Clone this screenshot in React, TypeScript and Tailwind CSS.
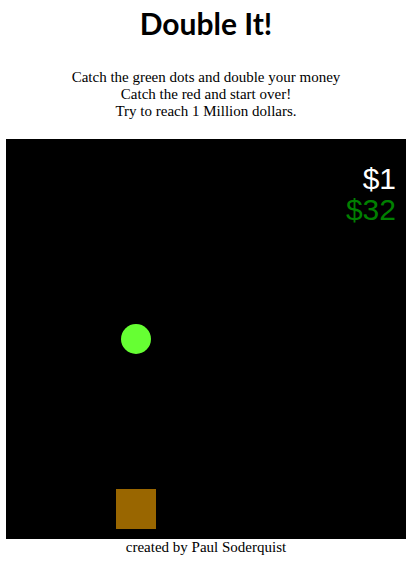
export default function App() {
  return (
    <div className="w-[412px] h-[564px] bg-white flex flex-col items-center">
      <h1 className="pt-[5px] text-[30px] leading-[36px] font-bold text-black font-['Lato',sans-serif]">
        Double It!
      </h1>
      <div className="mt-[28px] text-center text-[15px] leading-[17px] text-black font-['Liberation_Serif',serif]">
        <div>Catch the green dots and double your money</div>
        <div>Catch the red and start over!</div>
        <div>Try to reach 1 Million dollars.</div>
      </div>
      <div className="relative mt-[19px] w-[400px] h-[400px] bg-black">
        <div className="absolute right-[10px] top-[24px] text-right text-[30px] leading-[31px] font-['Liberation_Sans',sans-serif]">
          <div className="text-white">$1</div>
          <div className="text-[#008000]">$32</div>
        </div>
        <div className="absolute left-[115px] top-[185px] w-[30px] h-[30px] rounded-full bg-[#66ff33]" />
        <div className="absolute left-[110px] top-[350px] w-[40px] h-[40px] bg-[#996600]" />
      </div>
      <div className="text-[15px] leading-[17px] text-black font-['Liberation_Serif',serif]">
        created by Paul Soderquist
      </div>
    </div>
  );
}
